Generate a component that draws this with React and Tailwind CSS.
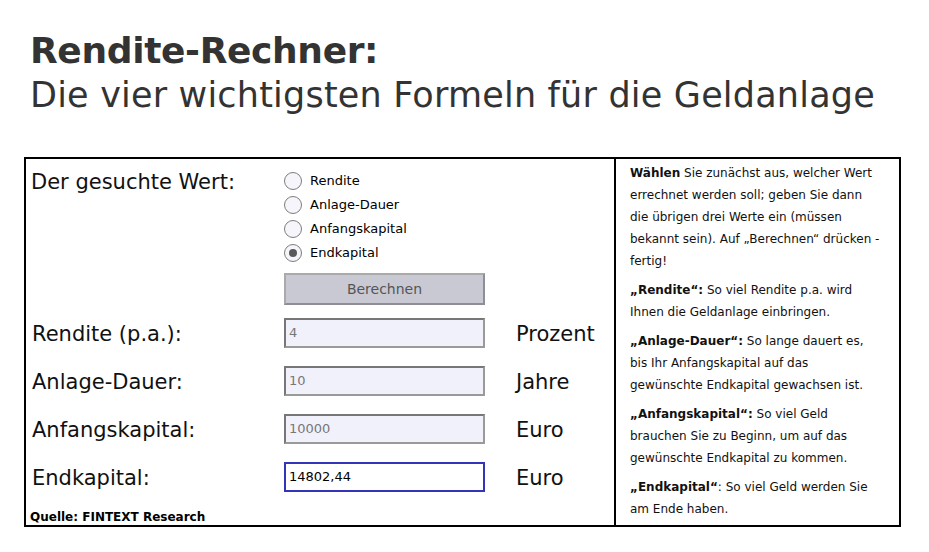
import React from 'react';

const body = "font-['DejaVu_Sans',Verdana,sans-serif]";

function Radio({ label, checked }) {
    return (
        <div className="flex items-center h-[24px]">
            <span className="w-[18px] h-[18px] rounded-full border border-[#7d7d7d] bg-[#f5f5fb] flex items-center justify-center">
                {checked && <span className="w-[8px] h-[8px] rounded-full bg-[#5a5a5a]" />}
            </span>
            <span className="ml-[8px] text-[13px] text-black">{label}</span>
        </div>
    );
}

function Field({ label, value, unit, active }) {
    return (
        <>
            <div className="h-[48px] flex items-center pt-[3px] text-[21px] text-[#111] pl-[2px]">{label}</div>
            <div className="h-[48px] flex items-center">
                <div
                    className={
                        active
                            ? "w-[201px] h-[30px] border-2 border-[#3434b8] bg-white flex items-center pl-[3px] text-[13px] text-black"
                            : "w-[201px] h-[30px] border-2 border-[#777] border-r-[#9a9a9a] border-b-[#9a9a9a] bg-[#f1f1fc] flex items-center pl-[3px] text-[13px] text-[#777]"
                    }
                >
                    {value}
                </div>
            </div>
            <div className="h-[48px] flex items-center pt-[3px] pl-[31px] text-[21px] text-[#111]">{unit}</div>
        </>
    );
}

export default function App() {
    return (
        <div className={`bg-white w-[929px] h-[552px] ${body}`}>
            <div className="pl-[30px] pt-[29px] text-[#333]">
                <h1 className="text-[36px] font-bold leading-[44px] tracking-[-0.35px]">Rendite-Rechner:</h1>
                <p className="text-[35px] leading-[44px] tracking-[0.2px]">
                    Die vier wichtigsten Formeln für die Geldanlage
                </p>
            </div>

            <div className="ml-[24px] mt-[40px] w-[877px] h-[370px] border-2 border-black flex">
                {/* Rechner */}
                <div className="w-[590px] border-r-2 border-black pl-[4px] pt-[10px]">
                    <div className="grid grid-cols-[254px_201px_1fr]">
                        <div className="text-[21px] text-[#111] leading-[24px] pl-[1px] pt-[1px]">Der gesuchte Wert:</div>
                        <div className="col-span-2">
                            <Radio label="Rendite" />
                            <Radio label="Anlage-Dauer" />
                            <Radio label="Anfangskapital" />
                            <Radio label="Endkapital" checked />
                        </div>

                        <div />
                        <div className="mt-[8px] mb-[4px] h-[32px] border-2 border-[#8e8e96] border-t-[#aaa] border-l-[#aaa] bg-[#c9c9d3] flex items-center justify-center text-[14px] text-[#555]">
                            Berechnen
                        </div>
                        <div />

                        <Field label="Rendite (p.a.):" value="4" unit="Prozent" />
                        <Field label="Anlage-Dauer:" value="10" unit="Jahre" />
                        <Field label="Anfangskapital:" value="10000" unit="Euro" />
                        <Field label="Endkapital:" value="14802,44" unit="Euro" active />
                    </div>
                    <div className="mt-[7px] text-[12px] font-bold text-black">Quelle: FINTEXT Research</div>
                </div>

                {/* Hinweise */}
                <div className="flex-1 pl-[14px] pt-[3px] text-[12px] leading-[22px] text-[#111] whitespace-nowrap">
                    <p>
                        <b>Wählen</b> Sie zunächst aus, welcher Wert<br />
                        errechnet werden soll; geben Sie dann<br />
                        die übrigen drei Werte ein (müssen<br />
                        bekannt sein). Auf „Berechnen“ drücken -<br />
                        fertig!
                    </p>
                    <p className="mt-[7px]">
                        <b>„Rendite“:</b> So viel Rendite p.a. wird<br />
                        Ihnen die Geldanlage einbringen.
                    </p>
                    <p className="mt-[7px]">
                        <b>„Anlage-Dauer“:</b> So lange dauert es,<br />
                        bis Ihr Anfangskapital auf das<br />
                        gewünschte Endkapital gewachsen ist.
                    </p>
                    <p className="mt-[7px]">
                        <b>„Anfangskapital“:</b> So viel Geld<br />
                        brauchen Sie zu Beginn, um auf das<br />
                        gewünschte Endkapital zu kommen.
                    </p>
                    <p className="mt-[7px]">
                        <b>„Endkapital“</b>: So viel Geld werden Sie<br />
                        am Ende haben.
                    </p>
                </div>
            </div>
        </div>
    );
}
